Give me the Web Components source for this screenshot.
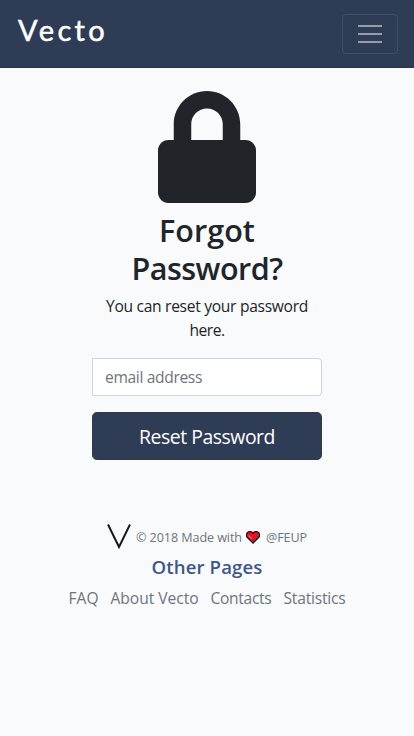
<!DOCTYPE html>
<html lang="en"><head><meta charset="utf-8"><title>Vecto</title>
<style>
html,body{margin:0;background:#f8fafc}
body{font-family:"Open Sans","Noto Sans",sans-serif;color:#212529;height:736px;overflow:hidden}
</style></head><body>
<vecto-page></vecto-page>
<script>
const define=(name,html,ready)=>customElements.define(name,class extends HTMLElement{
  constructor(){super();this.attachShadow({mode:'open'}).innerHTML=html}
  connectedCallback(){if(ready)ready(this)}
});

/* A single line of text whose tracking is adjusted to fill the given width. */
define('tracked-text',`<style>:host{display:inline-block;white-space:nowrap}span{display:inline-block}</style><span><slot></slot></span>`,el=>{
  const w=parseFloat(el.getAttribute('width')),span=el.shadowRoot.querySelector('span');
  const n=el.textContent.length;
  span.style.letterSpacing=(w-span.getBoundingClientRect().width)/n+'px';
  el.style.width=w+'px';
});

define('nav-toggle',`<style>
:host{display:block}
button{display:flex;align-items:center;justify-content:center;box-sizing:border-box;width:56px;height:40px;padding:0;background:none;border:1px solid rgba(255,255,255,.1);border-radius:4px}
svg{display:block}
</style><button aria-label="Menu"><svg width="30" height="30" viewBox="0 0 30 30"><path stroke="rgba(255,255,255,.5)" stroke-width="2" stroke-miterlimit="10" d="M3 7h24M3 15h24M3 23h24"/></svg></button>`);

define('site-bar',`<style>
:host{display:flex;box-sizing:border-box;height:68px;padding:0 16px 0 18px;align-items:center;justify-content:space-between;background:#2f3c56;border-bottom:1px solid #2a3448}
.brand{color:#fff;font:400 29px/36px Lato,sans-serif;padding-bottom:7px;-webkit-text-stroke:.5px #fff}
</style><div class="brand"><tracked-text width="90">Vecto</tracked-text></div><nav-toggle></nav-toggle>`);

define('lock-icon',`<style>:host,svg{display:block}</style><svg width="98" height="112" viewBox="0 0 448 512"><path fill="#212529" d="M400 224h-24v-72C376 68.2 307.8 0 224 0S72 68.2 72 152v72H48c-26.5 0-48 21.5-48 48v192c0 26.5 21.5 48 48 48h352c26.5 0 48-21.5 48-48V272c0-26.5-21.5-48-48-48zm-104 0H152v-72c0-39.7 32.3-72 72-72s72 32.3 72 72v72z"/></svg>`);

define('reset-form',`<style>
:host{display:flex;flex-direction:column;align-items:center;width:230px;margin:0 auto;padding-top:23px}
h2{margin:8px 0 0;font-size:30.5px;font-weight:600;line-height:38px;text-align:center;height:76px}
h2 tracked-text,p tracked-text{display:block;margin:0 auto}
p{margin:7px 0 0;font-size:15.6px;line-height:24px;height:48px}
.field{box-sizing:border-box;width:230px;height:38px;margin-top:16px;padding:0 12px;border:1px solid #ced4da;border-radius:0 4px 4px 0;background:#fff;color:#6c757d;font-size:15.6px;line-height:36px}
button{width:230px;height:48px;margin:16px 0 0;padding:2px 0 0;border:1px solid #343a40;border-radius:4.8px;background:#2f3c56;color:#fff;font:19.4px/30px "Open Sans","Noto Sans",sans-serif}
</style>
<lock-icon></lock-icon>
<h2><tracked-text width="96">Forgot</tracked-text><tracked-text width="151">Password?</tracked-text></h2>
<p><tracked-text width="202">You can reset your password</tracked-text><tracked-text width="35">here.</tracked-text></p>
<div class="field" role="textbox"><tracked-text width="97">email address</tracked-text></div>
<button><tracked-text width="136">Reset Password</tracked-text></button>`);

define('heart-icon',`<style>:host,svg{display:block}</style><svg width="14" height="13" viewBox="0 0 14 13"><path d="M7 12.1 1.2 6.3C.2 5 .3 2.7 1.6 1.6 3.2.2 5.8.4 7 2.3 8.2.4 10.8.2 12.4 1.6c1.3 1.1 1.4 3.4.4 4.7z" fill="#e81224" stroke="#111" stroke-width="1.3"/><path d="m2.6 4.7 2.9 3" stroke="#f4757f" stroke-width="1.2"/></svg>`);

define('site-footer',`<style>
:host{display:flex;flex-direction:column;align-items:center;padding-top:63px;color:#6c757d}
.credit{display:flex;align-items:center;width:200px;height:26px;font-size:12.6px;line-height:20px}
.credit tracked-text{padding-top:3px}
.v{display:block;width:24px;height:26px;margin-right:5px}
heart-icon{margin:3px 6px 0 4px}
h5{margin:6px 0 0;color:#3f5787;font-size:18.6px;font-weight:600;line-height:24px}
nav{display:flex;gap:12px;margin-top:7px;width:277px;font-size:15.6px;line-height:24px}
</style>
<div class="credit"><svg class="v" viewBox="0 0 24 26"><path d="M1 1.5 12 24 23 1.5" fill="none" stroke="#161b20" stroke-width="2"/></svg><tracked-text width="106">© 2018 Made with</tracked-text><heart-icon></heart-icon><tracked-text width="41">@FEUP</tracked-text></div>
<h5><tracked-text width="111">Other Pages</tracked-text></h5>
<nav><tracked-text width="30">FAQ</tracked-text><tracked-text width="88">About Vecto</tracked-text><tracked-text width="61">Contacts</tracked-text><tracked-text width="62">Statistics</tracked-text></nav>`);

define('vecto-page',`<style>:host{display:block}</style><site-bar></site-bar><main><reset-form></reset-form></main><site-footer></site-footer>`);
</script></body></html>
